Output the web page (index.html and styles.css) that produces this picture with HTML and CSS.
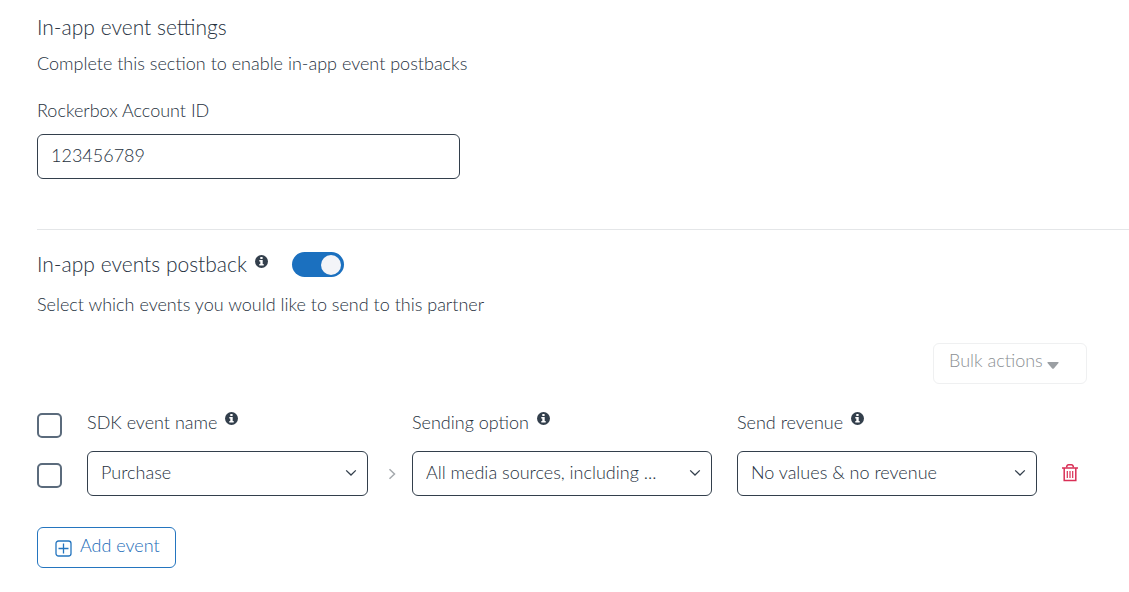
FILE: index.html
```html
<!DOCTYPE html>
<html lang="en">
<head>
<meta charset="UTF-8">
<meta name="viewport" content="width=device-width, initial-scale=1.0">
<title>In-app event settings</title>
<link rel="stylesheet" href="styles.css">
</head>
<body>
  <!-- Shared icons -->
  <svg class="sprite" aria-hidden="true">
    <symbol id="info" viewBox="0 0 13 13">
      <circle cx="6.5" cy="6.5" r="6.5" fill="#333f4c"/>
      <path fill="#fff" d="M5.3 2h2.3v2H5.3zM4.3 5h3.4v4h1v1.4H4.3V9h1V6.4h-1z"/>
    </symbol>
    <symbol id="chevron" viewBox="0 0 12 8">
      <path fill="none" stroke="#333f4c" stroke-width="1.3" d="M1.2 1.4 6 6l4.800-4.600"/>
    </symbol>
  </svg>

  <main class="page">
    <section class="settings">
      <h2>In-app event settings</h2>
      <p>Complete this section to enable in-app event postbacks</p>
      <label class="account-label" for="account">Rockerbox Account ID</label>
      <input class="field account" id="account" type="text" value="123456789">
    </section>

    <section class="postback">
      <div class="postback-title">
        <h2><label for="postback">In-app events postback</label></h2>
        <svg class="info"><use href="#info"/></svg>
        <input class="toggle" id="postback" type="checkbox" role="switch" checked>
      </div>
      <p>Select which events you would like to send to this partner</p>

      <div class="events">
        <button class="btn bulk" type="button" disabled>
          Bulk actions
          <svg width="12" height="7" viewBox="0 0 12 7"><path fill="#9b9fa3" d="M1 0h10q1 0 .5.900L6.800 6.400q-.8.800-1.600 0L.5.900Q0 0 1 0z"/></svg>
        </button>

        <div class="event-row event-head">
          <input class="check" type="checkbox" aria-label="Select all events">
          <div class="col-label"><label for="event">SDK event name</label><svg class="info"><use href="#info"/></svg></div>
          <span></span>
          <div class="col-label"><label for="sending">Sending option</label><svg class="info"><use href="#info"/></svg></div>
          <span></span>
          <div class="col-label"><label for="revenue">Send revenue</label><svg class="info"><use href="#info"/></svg></div>
        </div>

        <div class="event-row">
          <input class="check" type="checkbox" aria-label="Select Purchase">
          <div class="select">
            <select class="field" id="event"><option>Purchase</option></select>
            <svg class="chevron"><use href="#chevron"/></svg>
          </div>
          <svg class="arrow" width="8" height="12" viewBox="0 0 8 12"><path fill="none" stroke="#a5a9ad" stroke-width="1.500" d="M1.500 1.200 6.500 6l-5 4.800"/></svg>
          <div class="select">
            <select class="field" id="sending"><option>All media sources, including ...</option></select>
            <svg class="chevron"><use href="#chevron"/></svg>
          </div>
          <span></span>
          <div class="select">
            <select class="field" id="revenue"><option>No values &amp; no revenue</option></select>
            <svg class="chevron"><use href="#chevron"/></svg>
          </div>
          <button class="delete" type="button" aria-label="Delete event">
            <svg width="16" height="18" viewBox="0 0 16 18" fill="none" stroke="#d92f56">
              <path stroke-width="1.500" d="M0 4h16M2.200 4v12.500h11.600V4"/>
              <path stroke-width="1.500" d="M4.500 3.500Q5 .8 6.500.8h3Q11 .8 11.500 3.500"/>
              <path stroke-width="1.200" d="M5.300 7v7M8 7v7M10.700 7v7"/>
            </svg>
          </button>
        </div>
      </div>

      <button class="btn add" type="button">
        <svg width="17" height="17" viewBox="0 0 17 17" fill="none" stroke="#2475bf" stroke-width="1.300"><rect x="1" y="1" width="15" height="15" rx="2.500"/><path d="M8.500 3.500v10M3.500 8.500h10"/></svg>
        Add event
      </button>
    </section>
  </main>
</body>
</html>
```

FILE: styles.css
```css
* {
  box-sizing: border-box;
}

body {
  margin: 0;
  background: #fff;
  color: #26313e;
  font: 300 18px/24px Lato, "Open Sans", sans-serif;
}

.sprite {
  display: none;
}

.page {
  padding: 15px 0 24px 37px;
}

h2 {
  margin: 0;
  font-size: 21px;
  font-weight: 300;
  line-height: 24px;
}

p {
  margin: 12px 0 0;
}

.settings {
  padding-bottom: 50px;
  border-bottom: 1px solid #e4e6e8;
}

.account-label {
  display: block;
  margin: 23px 0 12px;
}

.field {
  display: block;
  width: 100%;
  height: 45px;
  padding: 0 13px 4px;
  border: 1px solid #333f4c;
  border-radius: 6px;
  background: #fff;
  color: inherit;
  font: inherit;
}

.account {
  max-width: 423px;
}

.postback {
  padding-top: 22px;
}

.postback-title {
  display: flex;
  align-items: center;
}

.postback h2 {
  padding-bottom: 1px;
}

.postback p {
  margin-top: 15px;
}

.info {
  width: 13px;
  height: 13px;
  margin: 0 0 6px 8px;
}

/* On/off switch */
.toggle {
  appearance: none;
  display: flex;
  align-items: center;
  width: 52px;
  height: 25px;
  margin: 0 0 0 24px;
  padding: 0 3px;
  border-radius: 13px;
  background: #a5a9ad;
}

.toggle::before {
  content: "";
  width: 20px;
  height: 20px;
  border-radius: 50%;
  background: #f3f4f8;
}

.toggle:checked {
  justify-content: flex-end;
  background: #1b70bf;
}

/* Events list */
.events {
  display: flex;
  flex-direction: column;
  margin: 27px 42px 31px 0;
}

.btn {
  display: flex;
  align-items: center;
  height: 41px;
  border: 1px solid #2475bf;
  border-radius: 6px;
  background: #fff;
  color: #1b6cb8;
  font: inherit;
}

.bulk {
  align-self: flex-end;
  gap: 4px;
  width: 154px;
  padding: 0 15px 7px;
  border-color: #eff0f1;
  color: #8b8f93;
}

.bulk svg {
  margin-top: 10px;
}

.event-row {
  display: grid;
  grid-template-columns: 50px 281fr 44px 300fr 25px 300fr 50px;
  align-items: center;
}

.event-head {
  margin: 26px 0 13px;
}

.col-label {
  display: flex;
  align-items: center;
  padding-bottom: 5px;
  line-height: 22px;
}

.check {
  appearance: none;
  width: 25px;
  height: 25px;
  margin: 3px 0 0;
  border: 2px solid #5b6b7c;
  border-radius: 5px;
}

.check:checked {
  background: #1b70bf;
}

.select {
  position: relative;
}

.select .field {
  appearance: none;
  padding-right: 30px;
}

.chevron {
  position: absolute;
  top: 18px;
  right: 11px;
  width: 12px;
  height: 8px;
  pointer-events: none;
}

.arrow {
  justify-self: end;
  margin-right: 16px;
}

.delete {
  justify-self: end;
  display: flex;
  margin: 0 9px 2px 0;
  padding: 0;
  border: 0;
  background: none;
}

.add {
  gap: 8px;
  padding: 0 15px 6px 17px;
}

.add svg {
  margin-top: 8px;
}
```
